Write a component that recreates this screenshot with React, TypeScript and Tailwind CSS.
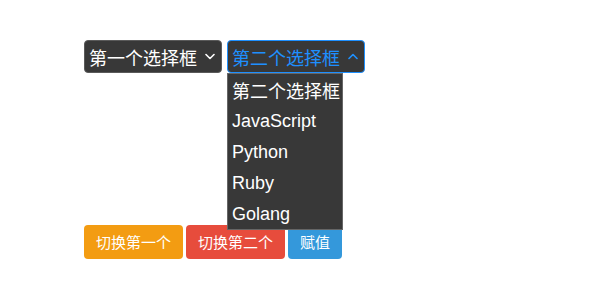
import React from "react";

const cjk = { fontFamily: '"Microsoft YaHei", "Noto Sans CJK SC", "Liberation Sans", sans-serif' };

function Chevron({ up, color }: { up?: boolean; color: string }) {
  return (
    <svg width="10" height="7" viewBox="0 0 10 7" fill="none">
      {up ? (
        <path d="M1 5.5 L5 1.5 L9 5.5" stroke={color} strokeWidth="1.6" strokeLinecap="round" strokeLinejoin="round" />
      ) : (
        <path d="M1 1.5 L5 5.5 L9 1.5" stroke={color} strokeWidth="1.6" strokeLinecap="round" strokeLinejoin="round" />
      )}
    </svg>
  );
}

export default function App() {
  const items = ["第二个选择框", "JavaScript", "Python", "Ruby", "Golang"];
  return (
    <div className="w-[590px] h-[300px] bg-white pt-[40px] pl-[84px]" style={{ fontFamily: '"Liberation Sans", "Noto Sans CJK SC", sans-serif' }}>
      <div className="flex gap-[5px]">
        <div className="flex h-[33px] w-[138px] items-center justify-between rounded-[4px] border border-[#5a5a5a] bg-[#383838] pl-[4px] pr-[6px]">
          <span className="text-[18px] leading-[20px] text-white" style={cjk}>第一个选择框</span>
          <Chevron color="#ffffff" />
        </div>
        <div className="relative">
          <div className="flex h-[33px] w-[138px] items-center justify-between rounded-[4px] border border-[#1e90ff] bg-[#383838] pl-[4px] pr-[6px]">
            <span className="text-[18px] leading-[20px] text-[#1e90ff]" style={cjk}>第二个选择框</span>
            <Chevron up color="#1e90ff" />
          </div>
          <div className="absolute left-0 top-[33px] z-10 flex w-[116px] flex-col border border-[#666] bg-[#383838]">
            {items.map((it, i) => (
              <div key={i} className="flex h-[31px] items-center pl-[4px] text-[18px] leading-[20px] text-white" style={i === 0 ? cjk : undefined}>
                {it}
              </div>
            ))}
          </div>
        </div>
      </div>
      <div className="mt-[152px] flex gap-[3px]" style={cjk}>
        <button className="h-[34px] rounded-[4px] bg-[#f39c12] px-[12px] text-[15px] leading-[20px] text-white">切换第一个</button>
        <button className="h-[34px] rounded-[4px] bg-[#e74c3c] px-[12px] text-[15px] leading-[20px] text-white">切换第二个</button>
        <button className="h-[34px] rounded-[4px] bg-[#3498db] px-[12px] text-[15px] leading-[20px] text-white">赋值</button>
      </div>
    </div>
  );
}
